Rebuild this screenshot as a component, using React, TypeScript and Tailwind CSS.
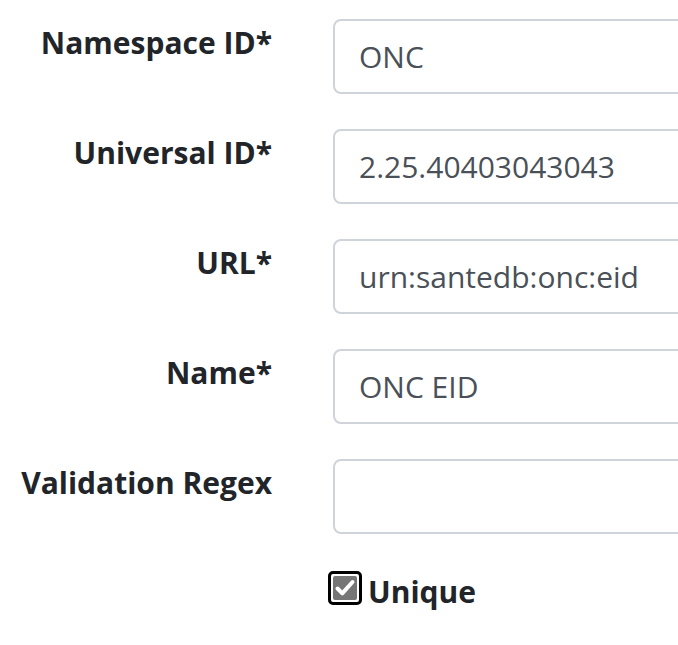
import React from "react";

const fields = [
  { label: "Namespace ID*", value: "ONC" },
  { label: "Universal ID*", value: "2.25.40403043043" },
  { label: "URL*", value: "urn:santedb:onc:eid" },
  { label: "Name*", value: "ONC EID" },
  { label: "Validation Regex", value: "" },
];

function FieldRow({ label, value }: { label: string; value: string }) {
  return (
    <div className="flex items-start mb-[35px]">
      <label className="w-[272px] shrink-0 text-right font-bold text-[30px] leading-[44px] pt-[2px] text-[#212529]">
        {label}
      </label>
      <div className="ml-[61px] shrink-0">
        <div className="w-[420px] h-[75px] border-2 border-[#ced4da] rounded-[8px] bg-white flex items-center px-[24px] text-[30px] text-[#495057]">
          {value}
        </div>
      </div>
    </div>
  );
}

export default function App() {
  return (
    <div
      className="w-[678px] h-[645px] overflow-hidden bg-white pt-[19px]"
      style={{ fontFamily: '"Open Sans", "Noto Sans", sans-serif' }}
    >
      {fields.map((f) => (
        <FieldRow key={f.label} label={f.label} value={f.value} />
      ))}
      <div className="flex items-start mt-[2px] ml-[328px]">
        <span className="mt-[2px] w-[34px] h-[34px] rounded-[5px] border-[3px] border-black bg-white p-[2px] flex">
          <span className="flex-1 rounded-[2px] bg-[#767676] flex items-center justify-center">
            <svg viewBox="0 0 24 24" className="w-[24px] h-[24px]">
              <path d="M4.5 12.5l4.8 4.8L19.5 6" fill="none" stroke="white" strokeWidth="4" strokeLinecap="round" strokeLinejoin="round" />
            </svg>
          </span>
        </span>
        <span className="ml-[6px] mt-[3px] font-bold text-[30px] leading-[40px] text-[#212529]">Unique</span>
      </div>
    </div>
  );
}
